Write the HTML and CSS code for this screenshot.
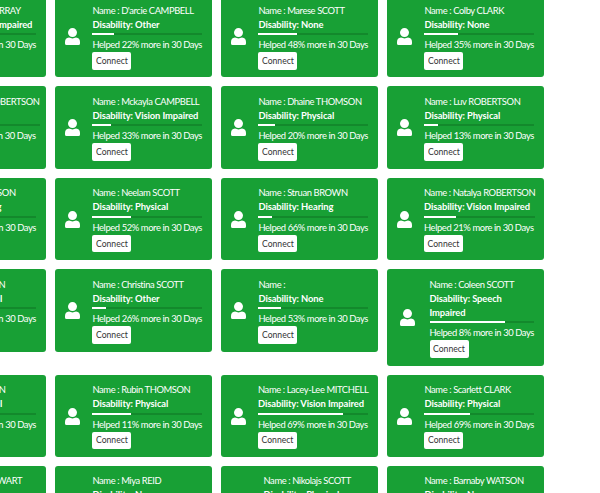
FILE: index.html
```html
<!DOCTYPE html>
<html>
<head>
    <link rel="stylesheet" href="styles.css">
</head>
<body>

<div class="card-grid">
    <!-- Row 1 -->
    <div class="card">
        <div class="card-icon"><svg width="15" height="17" viewBox="0 0 15 17"><circle cx="7.5" cy="4.6" r="4.5"/><path d="M4 9.6Q7.5 11.2 11 9.6Q15 10 15 14V15.5Q15 17 13.5 17H1.5Q0 17 0 15.5V14Q0 10 4 9.6Z"/></svg></div>
        <div class="card-body">
            <div class="card-line">Name : Aaliyah MURRAY</div>
            <div class="card-line disability">Disability: Vision Impaired</div>
            <div class="progress"><div class="progress-fill" style="width: 30%"></div></div>
            <div class="card-line">Helped 40% more in 30 Days</div>
            <button class="connect">Connect</button>
        </div>
    </div>
    <div class="card">
        <div class="card-icon"><svg width="15" height="17" viewBox="0 0 15 17"><circle cx="7.5" cy="4.6" r="4.5"/><path d="M4 9.6Q7.5 11.2 11 9.6Q15 10 15 14V15.5Q15 17 13.5 17H1.5Q0 17 0 15.5V14Q0 10 4 9.6Z"/></svg></div>
        <div class="card-body">
            <div class="card-line">Name : D'arcie CAMPBELL</div>
            <div class="card-line disability">Disability: Other</div>
            <div class="progress"><div class="progress-fill" style="width: 20%"></div></div>
            <div class="card-line">Helped 22% more in 30 Days</div>
            <button class="connect">Connect</button>
        </div>
    </div>
    <div class="card">
        <div class="card-icon"><svg width="15" height="17" viewBox="0 0 15 17"><circle cx="7.5" cy="4.6" r="4.5"/><path d="M4 9.6Q7.5 11.2 11 9.6Q15 10 15 14V15.5Q15 17 13.5 17H1.5Q0 17 0 15.5V14Q0 10 4 9.6Z"/></svg></div>
        <div class="card-body">
            <div class="card-line">Name : Marese SCOTT</div>
            <div class="card-line disability">Disability: None</div>
            <div class="progress"><div class="progress-fill" style="width: 35%"></div></div>
            <div class="card-line">Helped 48% more in 30 Days</div>
            <button class="connect">Connect</button>
        </div>
    </div>
    <div class="card">
        <div class="card-icon"><svg width="15" height="17" viewBox="0 0 15 17"><circle cx="7.5" cy="4.6" r="4.5"/><path d="M4 9.6Q7.5 11.2 11 9.6Q15 10 15 14V15.5Q15 17 13.5 17H1.5Q0 17 0 15.5V14Q0 10 4 9.6Z"/></svg></div>
        <div class="card-body">
            <div class="card-line">Name : Colby CLARK</div>
            <div class="card-line disability">Disability: None</div>
            <div class="progress"><div class="progress-fill" style="width: 31%"></div></div>
            <div class="card-line">Helped 35% more in 30 Days</div>
            <button class="connect">Connect</button>
        </div>
    </div>

    <!-- Row 2 -->
    <div class="card">
        <div class="card-icon"><svg width="15" height="17" viewBox="0 0 15 17"><circle cx="7.5" cy="4.6" r="4.5"/><path d="M4 9.6Q7.5 11.2 11 9.6Q15 10 15 14V15.5Q15 17 13.5 17H1.5Q0 17 0 15.5V14Q0 10 4 9.6Z"/></svg></div>
        <div class="card-body">
            <div class="card-line">Name : Natasha ROBERTSON</div>
            <div class="card-line disability">Disability: None</div>
            <div class="progress"><div class="progress-fill" style="width: 30%"></div></div>
            <div class="card-line">Helped 41% more in 30 Days</div>
            <button class="connect">Connect</button>
        </div>
    </div>
    <div class="card">
        <div class="card-icon"><svg width="15" height="17" viewBox="0 0 15 17"><circle cx="7.5" cy="4.6" r="4.5"/><path d="M4 9.6Q7.5 11.2 11 9.6Q15 10 15 14V15.5Q15 17 13.5 17H1.5Q0 17 0 15.5V14Q0 10 4 9.6Z"/></svg></div>
        <div class="card-body">
            <div class="card-line">Name : Mckayla CAMPBELL</div>
            <div class="card-line disability">Disability: Vision Impaired</div>
            <div class="progress"><div class="progress-fill" style="width: 17%"></div></div>
            <div class="card-line">Helped 33% more in 30 Days</div>
            <button class="connect">Connect</button>
        </div>
    </div>
    <div class="card">
        <div class="card-icon"><svg width="15" height="17" viewBox="0 0 15 17"><circle cx="7.5" cy="4.6" r="4.5"/><path d="M4 9.6Q7.5 11.2 11 9.6Q15 10 15 14V15.5Q15 17 13.5 17H1.5Q0 17 0 15.5V14Q0 10 4 9.6Z"/></svg></div>
        <div class="card-body">
            <div class="card-line">Name : Dhaine THOMSON</div>
            <div class="card-line disability">Disability: Physical</div>
            <div class="progress"><div class="progress-fill" style="width: 15%"></div></div>
            <div class="card-line">Helped 20% more in 30 Days</div>
            <button class="connect">Connect</button>
        </div>
    </div>
    <div class="card">
        <div class="card-icon"><svg width="15" height="17" viewBox="0 0 15 17"><circle cx="7.5" cy="4.6" r="4.5"/><path d="M4 9.6Q7.5 11.2 11 9.6Q15 10 15 14V15.5Q15 17 13.5 17H1.5Q0 17 0 15.5V14Q0 10 4 9.6Z"/></svg></div>
        <div class="card-body">
            <div class="card-line">Name : Luv ROBERTSON</div>
            <div class="card-line disability">Disability: Physical</div>
            <div class="progress"><div class="progress-fill" style="width: 12%"></div></div>
            <div class="card-line">Helped 13% more in 30 Days</div>
            <button class="connect">Connect</button>
        </div>
    </div>

    <!-- Row 3 -->
    <div class="card">
        <div class="card-icon"><svg width="15" height="17" viewBox="0 0 15 17"><circle cx="7.5" cy="4.6" r="4.5"/><path d="M4 9.6Q7.5 11.2 11 9.6Q15 10 15 14V15.5Q15 17 13.5 17H1.5Q0 17 0 15.5V14Q0 10 4 9.6Z"/></svg></div>
        <div class="card-body">
            <div class="card-line">Name : Ellis HARRISON</div>
            <div class="card-line disability">Disability: Hearing</div>
            <div class="progress"><div class="progress-fill" style="width: 30%"></div></div>
            <div class="card-line">Helped 40% more in 30 Days</div>
            <button class="connect">Connect</button>
        </div>
    </div>
    <div class="card">
        <div class="card-icon"><svg width="15" height="17" viewBox="0 0 15 17"><circle cx="7.5" cy="4.6" r="4.5"/><path d="M4 9.6Q7.5 11.2 11 9.6Q15 10 15 14V15.5Q15 17 13.5 17H1.5Q0 17 0 15.5V14Q0 10 4 9.6Z"/></svg></div>
        <div class="card-body">
            <div class="card-line">Name : Neelam SCOTT</div>
            <div class="card-line disability">Disability: Physical</div>
            <div class="progress"><div class="progress-fill" style="width: 35%"></div></div>
            <div class="card-line">Helped 52% more in 30 Days</div>
            <button class="connect">Connect</button>
        </div>
    </div>
    <div class="card">
        <div class="card-icon"><svg width="15" height="17" viewBox="0 0 15 17"><circle cx="7.5" cy="4.6" r="4.5"/><path d="M4 9.6Q7.5 11.2 11 9.6Q15 10 15 14V15.5Q15 17 13.5 17H1.5Q0 17 0 15.5V14Q0 10 4 9.6Z"/></svg></div>
        <div class="card-body">
            <div class="card-line">Name : Struan BROWN</div>
            <div class="card-line disability">Disability: Hearing</div>
            <div class="progress"><div class="progress-fill" style="width: 12%"></div></div>
            <div class="card-line">Helped 66% more in 30 Days</div>
            <button class="connect">Connect</button>
        </div>
    </div>
    <div class="card">
        <div class="card-icon"><svg width="15" height="17" viewBox="0 0 15 17"><circle cx="7.5" cy="4.6" r="4.5"/><path d="M4 9.6Q7.5 11.2 11 9.6Q15 10 15 14V15.5Q15 17 13.5 17H1.5Q0 17 0 15.5V14Q0 10 4 9.6Z"/></svg></div>
        <div class="card-body">
            <div class="card-line">Name : Natalya ROBERTSON</div>
            <div class="card-line disability">Disability: Vision Impaired</div>
            <div class="progress"><div class="progress-fill" style="width: 29%"></div></div>
            <div class="card-line">Helped 21% more in 30 Days</div>
            <button class="connect">Connect</button>
        </div>
    </div>

    <!-- Row 4 -->
    <div class="card">
        <div class="card-icon"><svg width="15" height="17" viewBox="0 0 15 17"><circle cx="7.5" cy="4.6" r="4.5"/><path d="M4 9.6Q7.5 11.2 11 9.6Q15 10 15 14V15.5Q15 17 13.5 17H1.5Q0 17 0 15.5V14Q0 10 4 9.6Z"/></svg></div>
        <div class="card-body">
            <div class="card-line">Name : Ellis BROWN</div>
            <div class="card-line disability">Disability: Physical</div>
            <div class="progress"><div class="progress-fill" style="width: 30%"></div></div>
            <div class="card-line">Helped 40% more in 30 Days</div>
            <button class="connect">Connect</button>
        </div>
    </div>
    <div class="card">
        <div class="card-icon"><svg width="15" height="17" viewBox="0 0 15 17"><circle cx="7.5" cy="4.6" r="4.5"/><path d="M4 9.6Q7.5 11.2 11 9.6Q15 10 15 14V15.5Q15 17 13.5 17H1.5Q0 17 0 15.5V14Q0 10 4 9.6Z"/></svg></div>
        <div class="card-body">
            <div class="card-line">Name : Christina SCOTT</div>
            <div class="card-line disability">Disability: Other</div>
            <div class="progress"><div class="progress-fill" style="width: 12%"></div></div>
            <div class="card-line">Helped 26% more in 30 Days</div>
            <button class="connect">Connect</button>
        </div>
    </div>
    <div class="card">
        <div class="card-icon"><svg width="15" height="17" viewBox="0 0 15 17"><circle cx="7.5" cy="4.6" r="4.5"/><path d="M4 9.6Q7.5 11.2 11 9.6Q15 10 15 14V15.5Q15 17 13.5 17H1.5Q0 17 0 15.5V14Q0 10 4 9.6Z"/></svg></div>
        <div class="card-body">
            <div class="card-line">Name :</div>
            <div class="card-line disability">Disability: None</div>
            <div class="progress"><div class="progress-fill" style="width: 21%"></div></div>
            <div class="card-line">Helped 53% more in 30 Days</div>
            <button class="connect">Connect</button>
        </div>
    </div>
    <div class="card">
        <div class="card-icon"><svg width="15" height="17" viewBox="0 0 15 17"><circle cx="7.5" cy="4.6" r="4.5"/><path d="M4 9.6Q7.5 11.2 11 9.6Q15 10 15 14V15.5Q15 17 13.5 17H1.5Q0 17 0 15.5V14Q0 10 4 9.6Z"/></svg></div>
        <div class="card-body">
            <div class="card-line">Name : Coleen SCOTT</div>
            <div class="card-line disability">Disability: Speech<br>Impaired</div>
            <div class="progress"><div class="progress-fill" style="width: 72%"></div></div>
            <div class="card-line">Helped 8% more in 30 Days</div>
            <button class="connect">Connect</button>
        </div>
    </div>

    <!-- Row 5 -->
    <div class="card">
        <div class="card-icon"><svg width="15" height="17" viewBox="0 0 15 17"><circle cx="7.5" cy="4.6" r="4.5"/><path d="M4 9.6Q7.5 11.2 11 9.6Q15 10 15 14V15.5Q15 17 13.5 17H1.5Q0 17 0 15.5V14Q0 10 4 9.6Z"/></svg></div>
        <div class="card-body">
            <div class="card-line">Name : Ellis WILSON</div>
            <div class="card-line disability">Disability: Physical</div>
            <div class="progress"><div class="progress-fill" style="width: 30%"></div></div>
            <div class="card-line">Helped 40% more in 30 Days</div>
            <button class="connect">Connect</button>
        </div>
    </div>
    <div class="card">
        <div class="card-icon"><svg width="15" height="17" viewBox="0 0 15 17"><circle cx="7.5" cy="4.6" r="4.5"/><path d="M4 9.6Q7.5 11.2 11 9.6Q15 10 15 14V15.5Q15 17 13.5 17H1.5Q0 17 0 15.5V14Q0 10 4 9.6Z"/></svg></div>
        <div class="card-body">
            <div class="card-line">Name : Rubin THOMSON</div>
            <div class="card-line disability">Disability: Physical</div>
            <div class="progress"><div class="progress-fill" style="width: 35%"></div></div>
            <div class="card-line">Helped 11% more in 30 Days</div>
            <button class="connect">Connect</button>
        </div>
    </div>
    <div class="card">
        <div class="card-icon"><svg width="15" height="17" viewBox="0 0 15 17"><circle cx="7.5" cy="4.6" r="4.5"/><path d="M4 9.6Q7.5 11.2 11 9.6Q15 10 15 14V15.5Q15 17 13.5 17H1.5Q0 17 0 15.5V14Q0 10 4 9.6Z"/></svg></div>
        <div class="card-body">
            <div class="card-line">Name : Lacey-Lee MITCHELL</div>
            <div class="card-line disability">Disability: Vision Impaired</div>
            <div class="progress"><div class="progress-fill" style="width: 77%"></div></div>
            <div class="card-line">Helped 69% more in 30 Days</div>
            <button class="connect">Connect</button>
        </div>
    </div>
    <div class="card">
        <div class="card-icon"><svg width="15" height="17" viewBox="0 0 15 17"><circle cx="7.5" cy="4.6" r="4.5"/><path d="M4 9.6Q7.5 11.2 11 9.6Q15 10 15 14V15.5Q15 17 13.5 17H1.5Q0 17 0 15.5V14Q0 10 4 9.6Z"/></svg></div>
        <div class="card-body">
            <div class="card-line">Name : Scarlett CLARK</div>
            <div class="card-line disability">Disability: Physical</div>
            <div class="progress"><div class="progress-fill" style="width: 42%"></div></div>
            <div class="card-line">Helped 69% more in 30 Days</div>
            <button class="connect">Connect</button>
        </div>
    </div>

    <!-- Row 6 -->
    <div class="card">
        <div class="card-icon"><svg width="15" height="17" viewBox="0 0 15 17"><circle cx="7.5" cy="4.6" r="4.5"/><path d="M4 9.6Q7.5 11.2 11 9.6Q15 10 15 14V15.5Q15 17 13.5 17H1.5Q0 17 0 15.5V14Q0 10 4 9.6Z"/></svg></div>
        <div class="card-body">
            <div class="card-line">Name : Sienna STEWART</div>
            <div class="card-line disability">Disability: None</div>
            <div class="progress"><div class="progress-fill" style="width: 30%"></div></div>
            <div class="card-line">Helped 40% more in 30 Days</div>
            <button class="connect">Connect</button>
        </div>
    </div>
    <div class="card">
        <div class="card-icon"><svg width="15" height="17" viewBox="0 0 15 17"><circle cx="7.5" cy="4.6" r="4.5"/><path d="M4 9.6Q7.5 11.2 11 9.6Q15 10 15 14V15.5Q15 17 13.5 17H1.5Q0 17 0 15.5V14Q0 10 4 9.6Z"/></svg></div>
        <div class="card-body">
            <div class="card-line">Name : Miya REID</div>
            <div class="card-line disability">Disability: None</div>
            <div class="progress"><div class="progress-fill" style="width: 30%"></div></div>
            <div class="card-line">Helped 40% more in 30 Days</div>
            <button class="connect">Connect</button>
        </div>
    </div>
    <div class="card">
        <div class="card-icon"><svg width="15" height="17" viewBox="0 0 15 17"><circle cx="7.5" cy="4.6" r="4.5"/><path d="M4 9.6Q7.5 11.2 11 9.6Q15 10 15 14V15.5Q15 17 13.5 17H1.5Q0 17 0 15.5V14Q0 10 4 9.6Z"/></svg></div>
        <div class="card-body">
            <div class="card-line">Name : Nikolajs SCOTT</div>
            <div class="card-line disability">Disability: Physical</div>
            <div class="progress"><div class="progress-fill" style="width: 30%"></div></div>
            <div class="card-line">Helped 7% more in 30 Days</div>
            <button class="connect">Connect</button>
        </div>
    </div>
    <div class="card">
        <div class="card-icon"><svg width="15" height="17" viewBox="0 0 15 17"><circle cx="7.5" cy="4.6" r="4.5"/><path d="M4 9.6Q7.5 11.2 11 9.6Q15 10 15 14V15.5Q15 17 13.5 17H1.5Q0 17 0 15.5V14Q0 10 4 9.6Z"/></svg></div>
        <div class="card-body">
            <div class="card-line">Name : Barnaby WATSON</div>
            <div class="card-line disability">Disability: None</div>
            <div class="progress"><div class="progress-fill" style="width: 30%"></div></div>
            <div class="card-line">Helped 40% more in 30 Days</div>
            <button class="connect">Connect</button>
        </div>
    </div>
</div>

</body>
</html>
```

FILE: styles.css
```css
/* General Styling */
html, body {
    height: 100%;
    overflow: hidden;
}

body {
    font-family: Lato, "Noto Sans", sans-serif;
    margin: 0;
    background-color: #fff;
}

/* The page is photographed scrolled, so the grid starts above and left of the window */
.card-grid {
    display: grid;
    grid-template-columns: repeat(4, 157px);
    gap: 9px;
    align-items: start;
    margin: -5px 0 0 -111px;
}

.card {
    display: flex;
    align-items: center;
    padding: 8.5px 10px 7.9px;
    background-color: #18a035;
    border-radius: 3px;
    color: #fff;
}

.card-icon {
    flex: 1;
    display: flex;
    justify-content: center;
    padding-right: 12px;
}

.card-icon svg {
    fill: #fff;
}

.card-body {
    flex: none;
}

.card-line {
    font-size: 9.4px;
    letter-spacing: -0.4px;
    line-height: 14px;
    white-space: nowrap;
}

/* Doesn't take part in the column width, the Helped line sets that */
.disability {
    width: 0;
    min-width: 100%;
    font-weight: 700;
    letter-spacing: -0.1px;
}

.progress {
    height: 2px;
    margin: 1.5px 0 3px;
    background-color: #13892c;
}

.progress-fill {
    height: 100%;
    background-color: #fff;
}

.connect {
    display: block;
    width: 39px;
    height: 17.5px;
    padding: 0;
    border: none;
    border-radius: 2px;
    background-color: #fff;
    color: #333;
    font-family: inherit;
    font-size: 8.6px;
}
```
